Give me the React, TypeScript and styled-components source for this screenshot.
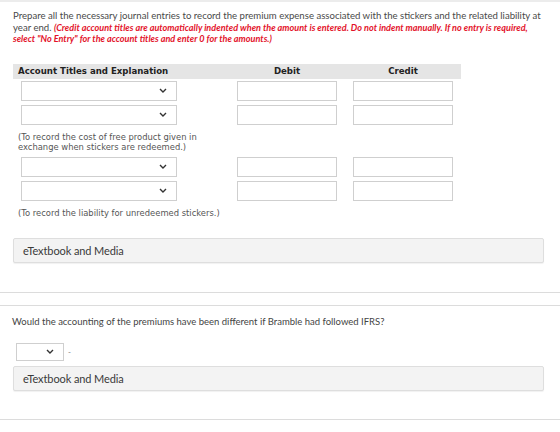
import styled, { createGlobalStyle } from "styled-components";

const GlobalStyle = createGlobalStyle`
  html, body {
    margin: 0;
    padding: 0;
    background: #ffffff;
  }
  body {
    font-family: Lato, "Open Sans", sans-serif;
    color: #444;
  }
`;

const Page = styled.div`
  width: 560px;
  height: 432px;
  overflow: hidden;
  border-top: 2px solid #ececec;
  box-sizing: border-box;
`;

const Prompt = styled.p`
  margin: 0;
  padding: 8px 13px 0;
  font-size: 9.6px;
  line-height: 11.6px;
  color: #4a4a4a;
`;

const Warning = styled.em`
  color: #e3122a;
  font-weight: 700;
  font-size: 9.1px;
`;

const Table = styled.div`
  margin: 19px 0 0 13px;
  width: 448px;
`;

const Row = styled.div<{ $head?: boolean }>`
  display: grid;
  grid-template-columns: 216px 116px 116px;
  align-items: center;
  height: ${(p) => (p.$head ? "15px" : "24px")};
  background: ${(p) => (p.$head ? "#e5e5e5" : "transparent")};
`;

const HeadCell = styled.div<{ $center?: boolean }>`
  font-family: "DejaVu Sans", Verdana, sans-serif;
  font-weight: 700;
  font-size: 8.6px;
  color: #222;
  padding-left: ${(p) => (p.$center ? "0" : "5px")};
  text-align: ${(p) => (p.$center ? "center" : "left")};
`;

const Cell = styled.div<{ $center?: boolean }>`
  display: flex;
  justify-content: ${(p) => (p.$center ? "center" : "flex-start")};
  padding-left: ${(p) => (p.$center ? "0" : "8px")};
`;

const SelectBox = styled.div<{ $w: number; $h: number }>`
  width: ${(p) => p.$w}px;
  height: ${(p) => p.$h}px;
  box-sizing: border-box;
  border: 1px solid #cfcfcf;
  background: #fff;
  display: flex;
  align-items: center;
  justify-content: flex-end;
  padding-right: 9px;
`;

const Amount = styled.div`
  width: 100px;
  height: 20px;
  box-sizing: border-box;
  border: 1px solid #cfcfcf;
  background: #fff;
`;

const Note = styled.div`
  font-family: "DejaVu Sans", Verdana, sans-serif;
  font-size: 8.4px;
  line-height: 10px;
  color: #555;
  padding: 5px 0 3px 5px;
  width: 212px;
`;

const Media = styled.div<{ $top: number }>`
  margin: ${(p) => p.$top}px 16px 0 13px;
  height: 25px;
  box-sizing: border-box;
  border: 1px solid #dedede;
  border-radius: 2px;
  background: #f3f3f3;
  box-shadow: 0 1px 1px rgba(0, 0, 0, 0.06);
  display: flex;
  align-items: center;
  padding-left: 9px;
  font-size: 11px;
  color: #3a3a3a;
  letter-spacing: -0.1px;
`;

const Divider = styled.div`
  margin-top: 29px;
  height: 12px;
  border-top: 1px solid #dcdcdc;
  border-bottom: 1px solid #dcdcdc;
`;

const Question = styled.p`
  margin: 10px 0 0 12px;
  font-size: 9.5px;
  line-height: 11px;
  color: #444;
`;

const AnswerLine = styled.div`
  display: flex;
  align-items: center;
  gap: 4px;
  margin: 16px 0 0 16px;
  font-size: 8px;
  color: #777;
`;

const BottomRule = styled.div`
  margin-top: 28px;
  border-top: 1px solid #dcdcdc;
`;

function Chevron() {
  return (
    <svg width="8" height="5" viewBox="0 0 8 5">
      <polyline points="1,1 4,4 7,1" fill="none" stroke="#333" strokeWidth="1.4" />
    </svg>
  );
}

function Dropdown({ w = 156, h = 20 }: { w?: number; h?: number }) {
  return (
    <SelectBox $w={w} $h={h}>
      <Chevron />
    </SelectBox>
  );
}

function EntryRow() {
  return (
    <Row>
      <Cell>
        <Dropdown />
      </Cell>
      <Cell $center>
        <Amount />
      </Cell>
      <Cell $center>
        <Amount />
      </Cell>
    </Row>
  );
}

export default function App() {
  return (
    <>
      <GlobalStyle />
      <Page>
        <Prompt>
          Prepare all the necessary journal entries to record the premium expense associated with the stickers and the related liability at
          year end. <Warning>(Credit account titles are automatically indented when the amount is entered. Do not indent manually. If no entry is required,
          select "No Entry" for the account titles and enter 0 for the amounts.)</Warning>
        </Prompt>

        <Table>
          <Row $head>
            <HeadCell>Account Titles and Explanation</HeadCell>
            <HeadCell $center>Debit</HeadCell>
            <HeadCell $center>Credit</HeadCell>
          </Row>
          <EntryRow />
          <EntryRow />
          <Note>(To record the cost of free product given in exchange when stickers are redeemed.)</Note>
          <EntryRow />
          <EntryRow />
          <Note>(To record the liability for unredeemed stickers.)</Note>
        </Table>

        <Media $top={17}>eTextbook and Media</Media>

        <Divider />

        <Question>Would the accounting of the premiums have been different if Bramble had followed IFRS?</Question>

        <AnswerLine>
          <Dropdown w={48} h={18} />
          <span>-</span>
        </AnswerLine>

        <Media $top={5}>eTextbook and Media</Media>

        <BottomRule />
      </Page>
    </>
  );
}
